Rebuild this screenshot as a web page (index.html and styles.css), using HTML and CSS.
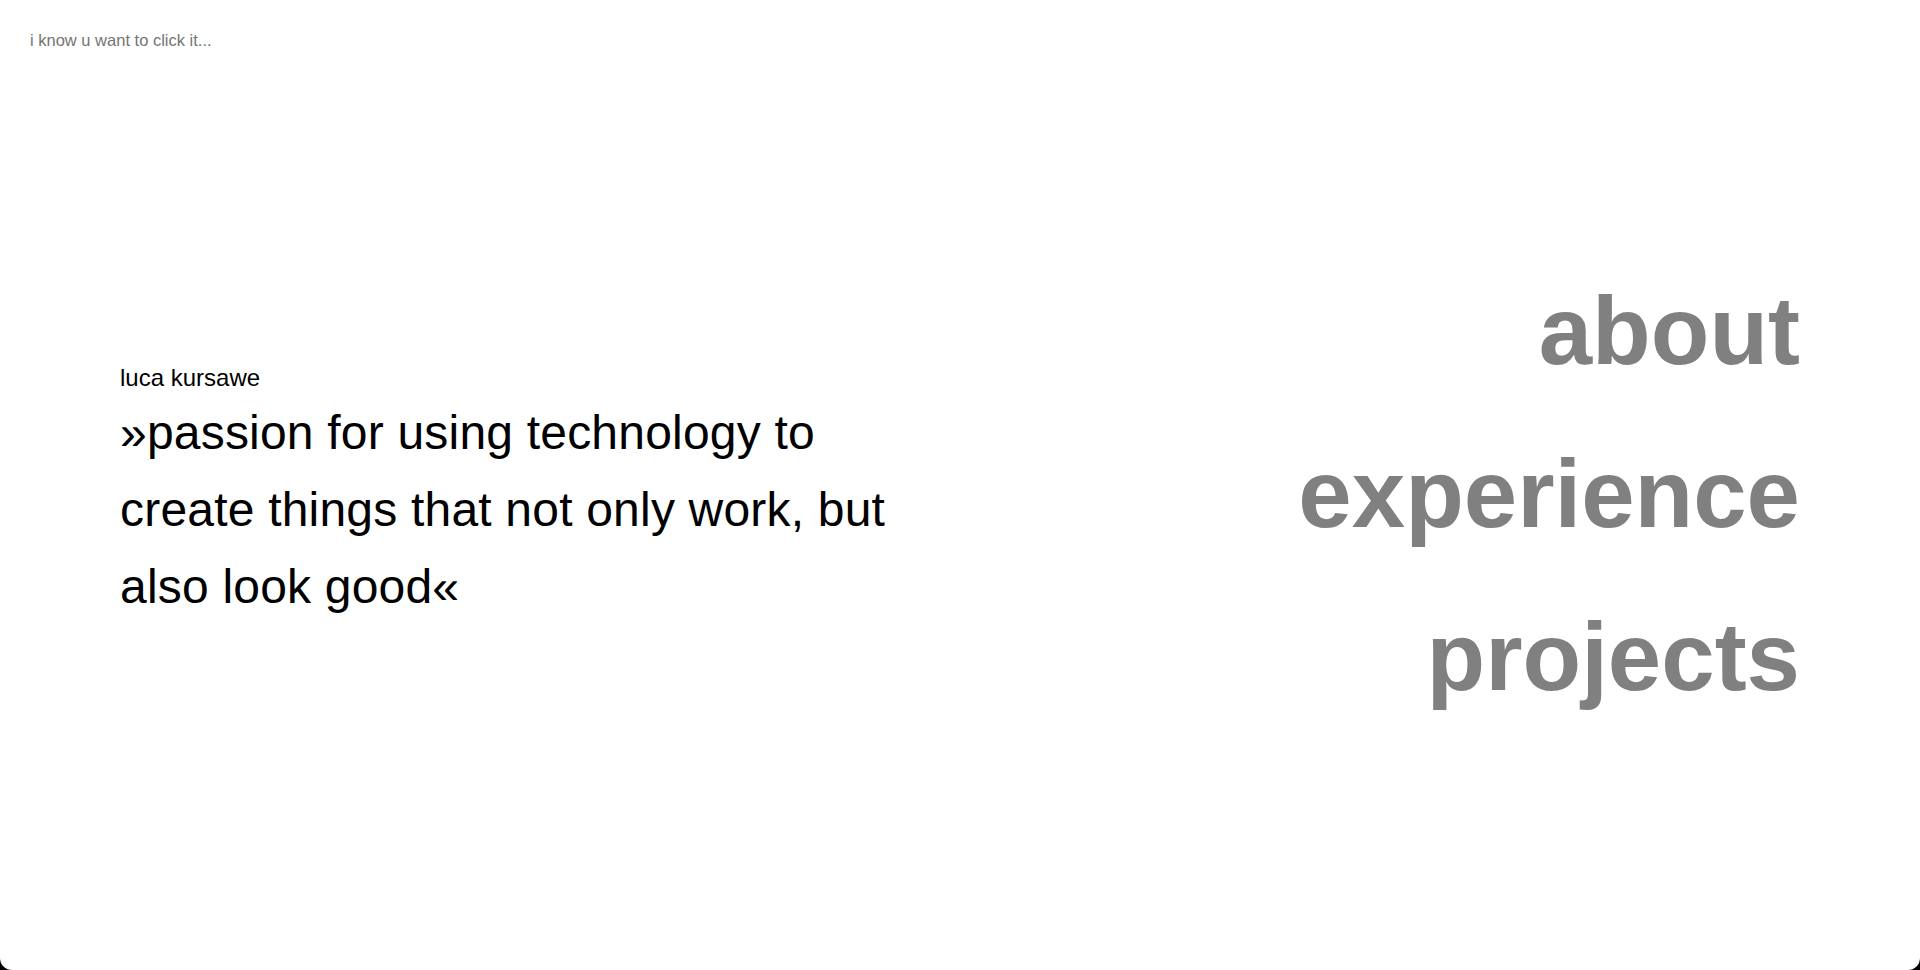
FILE: index.html
```html
<!DOCTYPE html>
<html lang="en">
<head>
<meta charset="utf-8">
<title>luca kursawe</title>
<link rel="stylesheet" href="styles.css">
</head>
<body>
<div class="page">
  <a class="hint" href="#">i know u want to click it...</a>
  <main class="main">
    <section class="intro">
      <p class="name">luca kursawe</p>
      <p class="quote">»passion for using technology to create things that not only work, but also look good«</p>
    </section>
    <nav class="nav">
      <a class="nav-link" href="#">about</a>
      <a class="nav-link" href="#">experience</a>
      <a class="nav-link" href="#">projects</a>
    </nav>
  </main>
</div>
</body>
</html>
```

FILE: styles.css
```css
html {
  background: #000;
  height: 100%;
}

body {
  margin: 0;
  height: 100%;
  font-family: "Liberation Sans", Arial, Helvetica, sans-serif;
  color: #000;
}

.page {
  position: relative;
  box-sizing: border-box;
  height: 100vh;
  padding: 16px 120px 0;
  background: #fff;
  border-radius: 0 0 12px 12px;
  display: flex;
  flex-direction: column;
}

.hint {
  position: absolute;
  top: 31px;
  left: 30px;
  font-size: 16.5px;
  color: #747474;
  text-decoration: none;
}

.main {
  flex: 1;
  display: flex;
  align-items: center;
  justify-content: space-between;
}

.intro {
  display: flex;
  flex-direction: column;
}

.name {
  margin: 0;
  font-size: 24px;
  line-height: 35px;
}

.quote {
  margin: 0;
  max-width: 800px;
  font-size: 48px;
  line-height: 1.6;
  letter-spacing: 0.2px;
}

.nav {
  display: flex;
  flex-direction: column;
  align-items: flex-end;
}

.nav-link {
  font-size: 96px;
  font-weight: 700;
  line-height: 163px;
  color: #808080;
  text-decoration: none;
}
```
